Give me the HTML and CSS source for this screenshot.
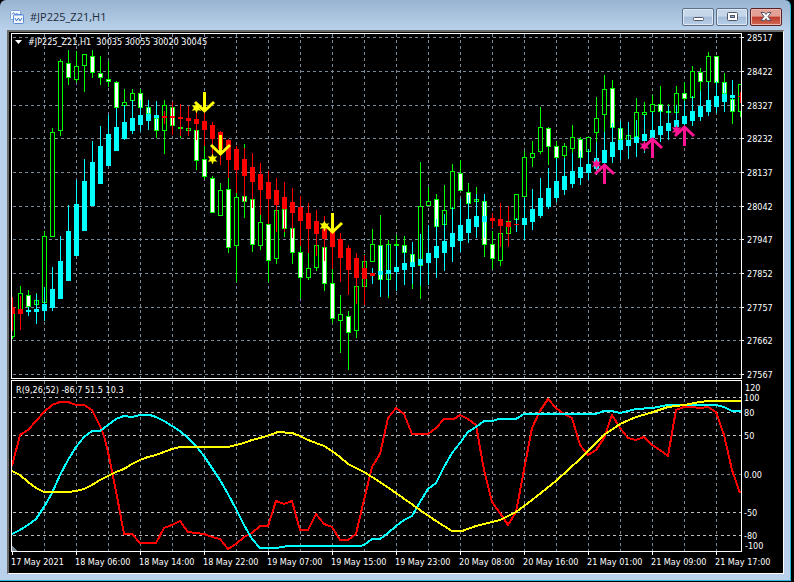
FILE: index.html
```html
<!DOCTYPE html>
<html lang="en">
<head>
<meta charset="utf-8">
<meta name="viewport" content="width=device-width, initial-scale=1">
<title>#JP225_Z21,H1</title>
<link rel="stylesheet" href="styles.css">
</head>
<body>
<main class="window">
  <header class="titlebar">
    <svg class="app-icon" viewBox="0 0 14 14" aria-hidden="true">
      <rect x="0.5" y="0.5" width="10" height="9" rx="1" fill="#f4f8fd" stroke="#7fa6dc"/>
      <path d="M2 4.500l1.500-2 1.500 2 1.500-1 2 1" fill="none" stroke="#5b8bd0"/>
      <rect x="3.500" y="4.500" width="10" height="9" rx="1" fill="#f4f8fd" stroke="#5b8bd8"/>
      <path d="M4 5.500h9" stroke="#a9c6ee"/>
      <path d="M5 8l1.500 3 2-3 1.500 3 2-3" fill="none" stroke="#3f78c8"/>
    </svg>
    <h1 class="title">#JP225_Z21,H1</h1>
    <div class="controls">
      <button class="control" type="button" aria-label="Minimize">
        <svg viewBox="0 0 12 12" aria-hidden="true"><rect x="1.500" y="6.500" width="10" height="3" rx="1" fill="#fff" stroke="#535666"/></svg>
      </button>
      <button class="control" type="button" aria-label="Maximize">
        <svg viewBox="0 0 12 12" aria-hidden="true"><rect x="1.500" y="1.500" width="10" height="8" rx="1" fill="#fff" stroke="#535666"/><rect x="4.500" y="4.500" width="4" height="2" fill="#8fb0d8" stroke="#535666"/></svg>
      </button>
      <button class="control control-close" type="button" aria-label="Close">
        <svg viewBox="0 0 12 12" aria-hidden="true"><path d="M1 1.500h3.500L6 3.500l1.500-2H11L8 5.500l3 4H7.500L6 7.500l-1.500 2H1l3-4z" fill="#fff" stroke="#535666"/></svg>
      </button>
    </div>
  </header>
  <section class="chart-frame">
    <svg class="chart" id="chart" viewBox="9 32 774 541" role="img" aria-label="#JP225_Z21,H1 candlestick chart"></svg>
  </section>
</main>
<script src="chart.js"></script>
</body>
</html>
```
FILE: styles.css
```css
* {
  box-sizing: border-box;
}

body {
  margin: 0;
  background: #000;
}

.window {
  margin-right: 3px;
  padding: 0 6px 6px 7px;
  border: solid #2cb8d8;
  border-width: 0 1px 1px 0;
  border-radius: 6px 6px 0 0;
  background: linear-gradient(#99b4d1, #b9d1ea 30px);
}

.titlebar {
  display: flex;
  align-items: center;
  height: 30px;
  padding: 4px 2px 0 3px;
}

.app-icon {
  width: 14px;
  height: 14px;
}

.title {
  flex: 1;
  margin: 0 0 0 6px;
  font: 11px/18px "Open Sans", sans-serif;
  color: #1e2a3a;
}

.controls {
  display: flex;
  gap: 2px;
}

.control {
  display: grid;
  place-items: center;
  width: 32px;
  height: 18px;
  padding: 0;
  border: 1px solid #5e6f87;
  border-radius: 2px;
  background: linear-gradient(#c6d7ea 45%, #a4bcd8 50%, #b8cfe8);
  box-shadow: inset 0 0 0 1px #dce8f5;
}

.control svg {
  width: 12px;
  height: 12px;
}

.control-close {
  border-color: #5a2028;
  background: linear-gradient(#e3a196 45%, #c0392b 50%, #cf6a55);
  box-shadow: inset 0 0 0 1px #eab8ae;
}

.chart-frame {
  border: solid #6a6a6a;
  border-width: 2px 1px 1px 2px;
  border-right-color: #fff;
  border-bottom-color: #fff;
  background: #000;
}

.chart {
  display: block;
  width: 100%;
  height: auto;
}

.chart text {
  font: 9px "DejaVu Sans Condensed", "DejaVu Sans", sans-serif;
  fill: #fff;
  white-space: pre;
}

.grid {
  stroke: #778899;
  stroke-dasharray: 3 3;
}

.level {
  stroke: #c0c0c0;
  stroke-dasharray: 3 3;
}

.frame {
  fill: none;
  stroke: #fff;
}

.crisp {
  shape-rendering: crispEdges;
}

.osc {
  fill: none;
  stroke-width: 2;
  stroke-linejoin: round;
  shape-rendering: crispEdges;
}

.osc-fast {
  stroke: #f00;
}

.osc-mid {
  stroke: #0ff;
}

.osc-slow {
  stroke: #ff0;
}

.arrow {
  fill: none;
  stroke-width: 3;
}

.sell .arrow {
  stroke: #ff0;
}

.sell .star {
  fill: #ff0;
}

.buy .arrow {
  stroke: #ff1493;
}

.buy .star {
  fill: #ff1493;
}
```
FILE: chart.js
```js
const NS = "http://www.w3.org/2000/svg";
const chart = document.getElementById("chart");
const LEFT = 11, RIGHT = 741, STEP = 8, FIRST = 12;

function add(parent, name, attrs, text) {
  const node = document.createElementNS(NS, name);
  for (const key in attrs) node.setAttribute(key, attrs[key]);
  if (text !== undefined) node.textContent = text;
  parent.appendChild(node);
  return node;
}

// Price bars: high, body top, body bottom, low, 1 when the body is filled.
const bars = [
  [310,310,337,339,0],[286,293,310,310,0],[290,295,307,308,1],[293,300,305,305,0],
  [231,236,303,303,0],[128,132,237,237,0],[59,61,131,136,0],[50,63,78,85,1],
  [51,66,80,82,0],[54,54,66,92,0],[50,56,73,78,1],[56,73,78,85,1],
  [61,79,82,87,1],[81,82,108,110,1],[89,102,106,106,0],[89,93,101,101,0],
  [89,93,108,131,1],[107,107,114,130,1],[115,118,131,138,1],[100,105,131,154,0],
  [107,107,126,126,1],[127,127,129,138,0],[128,128,131,131,0],[130,130,161,170,1],
  [146,159,177,179,1],[176,178,213,213,1],[183,190,216,216,0],[178,189,248,253,1],
  [193,197,246,282,0],[144,196,202,218,1],[199,199,245,252,1],[215,222,246,250,0],
  [224,224,261,282,1],[210,210,259,264,0],[209,209,229,237,1],[228,228,253,264,1],
  [246,252,278,298,1],[253,268,278,280,0],[245,245,268,271,0],[247,247,284,291,1],
  [269,283,319,323,1],[295,314,321,353,0],[311,316,333,370,1],[286,286,331,338,0],
  [254,261,287,287,0],[229,244,262,262,0],[215,245,280,280,1],[240,244,280,298,0],
  [235,244,246,246,0],[236,245,253,253,1],[254,254,266,289,1],[162,206,266,299,0],
  [187,201,206,206,0],[194,199,227,227,1],[185,210,225,225,0],[164,171,209,209,0],
  [160,173,191,191,1],[183,192,204,204,1],[187,199,202,202,0],[201,201,245,257,1],
  [231,244,259,269,1],[233,233,261,266,0],[221,221,234,234,0],[194,194,220,220,0],
  [151,157,197,197,0],[141,153,158,167,0],[107,127,152,154,0],[127,128,147,165,1],
  [141,146,158,158,1],[143,146,156,158,0],[125,137,149,154,0],[137,139,158,158,1],
  [137,137,152,152,0],[97,118,133,142,0],[75,89,115,132,0],[80,88,128,128,1],
  [128,128,140,140,1],[135,135,141,141,0],[98,112,137,137,0],[102,112,115,115,0],
  [95,104,112,112,0],[86,104,112,112,1],[104,111,113,113,0],[86,93,113,113,0],
  [82,93,99,101,1],[66,71,98,98,0],[68,72,82,91,1],[52,56,82,82,0],
  [56,56,83,83,1],[73,82,94,94,1],[99,99,112,124,1],[84,84,112,117,0]
];

// Smoothed bars: high, body top, body bottom, low, wick colour, body colour.
const UP = "#0ff", DOWN = "#f00";
const smooth = [
  [297,307,314,331,DOWN],[296,309,314,330,DOWN],[307,310,312,316,UP],[294,309,312,324,UP],
  [287,304,311,321,UP],[267,289,308,311,UP],[236,261,299,299,UP],[205,231,281,281,UP],
  [180,204,256,256,UP],[159,181,231,231,UP],[141,162,206,206,UP],[126,146,184,184,UP],
  [115,134,166,166,UP],[108,127,151,151,UP],[105,122,139,140,UP],[100,118,131,134,UP],
  [100,115,125,131,UP],[100,114,121,130,UP],[101,115,118,130,UP],[111,116,118,124,DOWN],
  [102,116,118,135,DOWN],[104,117,119,136,DOWN],[106,118,121,136,DOWN],[108,119,124,140,DOWN],
  [112,121,130,146,DOWN],[122,125,139,155,DOWN],[131,132,149,165,DOWN],[139,140,160,178,DOWN],
  [146,149,170,193,DOWN],[148,159,176,202,DOWN],[153,167,182,208,DOWN],[163,174,190,215,DOWN],
  [171,182,199,224,DOWN],[178,190,205,232,DOWN],[182,197,209,232,DOWN],[188,202,213,238,DOWN],
  [196,207,221,246,DOWN],[203,213,229,253,DOWN],[210,221,234,256,DOWN],[216,229,239,261,DOWN],
  [231,231,247,269,DOWN],[233,239,258,282,DOWN],[245,248,270,295,DOWN],[253,258,278,304,DOWN],
  [255,268,279,305,DOWN],[268,273,276,284,UP,DOWN],[246,271,275,297,UP],[245,270,274,296,UP],
  [246,267,272,291,UP],[246,263,270,285,UP],[242,262,267,284,UP],[234,259,265,286,UP],
  [225,253,263,285,UP],[219,246,258,278,UP],[214,241,253,271,UP],[207,233,247,262,UP],
  [199,225,241,252,UP],[195,219,233,243,UP],[194,216,227,238,UP],[194,216,222,238,UP],
  [213,218,221,228,DOWN],[203,219,226,247,DOWN],[206,222,227,247,DOWN],[218,224,225,232,UP,DOWN],
  [198,218,225,240,UP],[189,209,222,230,UP],[178,198,216,218,UP],[168,188,207,209,UP],
  [158,181,198,202,UP],[158,176,190,195,UP],[153,171,184,188,UP],[151,167,178,185,UP],
  [149,164,173,180,UP],[142,158,169,175,UP],[132,150,163,165,UP],[123,142,157,163,UP],
  [121,140,150,160,UP],[122,140,146,159,UP],[120,137,143,157,UP],[115,134,141,153,UP],
  [112,130,138,140,UP],[110,126,135,142,UP],[106,123,131,140,UP],[105,120,127,129,UP],
  [101,116,124,126,UP],[96,111,121,126,UP],[91,106,117,121,UP],[82,100,112,116,UP],
  [81,96,107,113,UP],[83,94,102,112,UP],[80,95,98,111,UP],[92,96,97,103,DOWN]
];

const prices = [[28517,37],[28422,71],[28327,105],[28232,138],[28137,172],[28042,206],
  [27947,239],[27852,273],[27757,307],[27662,340],[27567,374]];
const levels = [["120",387,0],["100",397,1],["80",412,1],["50",435,1],["0.00",474,2],
  ["-50",512,1],["-80",535,1],["-100",545,0]];
const times = ["17 May 2021","18 May 06:00","18 May 14:00","18 May 22:00","19 May 07:00",
  "19 May 15:00","19 May 23:00","20 May 08:00","20 May 16:00","21 May 01:00",
  "21 May 09:00","21 May 17:00"];

const oscillators = {
  "osc-fast": "12,466 20,435 28,430 36,421 44,412 52,405 60,402 68,402 76,405 84,405 92,410 100,426 104,436 108,452 116,491 124,534 132,534 140,543 156,543 164,528 172,525 180,521 188,532 204,534 212,537 220,539 228,549 236,544 244,537 252,533 260,526 268,526 276,501 284,504 292,501 300,530 308,530 316,514 324,524 332,527 340,540 348,540 356,534 364,500 372,467 380,454 388,418 396,408 404,414 412,434 428,434 436,428 444,419 454,419 460,415 468,419 476,425 484,470 492,502 500,513 508,525 516,512 524,470 532,428 540,411 548,399 556,408 564,414 572,418 580,445 588,455 596,450 604,438 612,415 620,428 628,438 636,440 644,437 652,445 660,450 668,456 676,410 684,407 692,407 700,408 708,407 716,412 724,435 732,470 740,493",
  "osc-mid": "12,534 20,530 28,525 36,519 44,507 52,493 60,475 68,460 76,447 84,437 92,431 100,431 108,425 116,419 124,416 132,417 140,415 150,415 156,417 164,421 172,426 180,431 188,438 196,446 204,456 212,468 220,480 228,494 236,509 244,525 252,539 260,548 276,548 288,546 360,546 364,545 372,539 380,539 388,533 396,526 404,520 412,516 420,502 428,489 436,483 444,467 452,453 460,443 468,432 476,427 484,421 493,421 498,419 516,419 524,414 596,414 604,411 612,411 620,413 636,409 652,408 668,405 716,405 724,407 732,411 741,411",
  "osc-slow": "12,471 20,475 28,482 36,488 44,492 68,492 76,491 84,489 92,485 100,480 108,476 116,472 124,469 132,464 140,460 148,457 156,455 164,452 172,449 180,447 228,447 244,443 252,440 260,438 270,435 278,432 292,433 300,436 308,440 324,446 332,451 340,457 348,464 364,472 380,482 396,493 420,510 436,521 452,531 462,531 476,526 500,520 508,516 516,512 524,506 532,500 556,481 580,459 604,435 620,424 636,417 650,413 668,407 684,405 700,402 708,401 741,401"
};

const clip = add(add(chart, "defs", {}), "clipPath", { id: "plot" });
add(clip, "rect", { x: LEFT + 1, y: 34, width: RIGHT - LEFT - 1, height: 517 });

function line(parent, x1, y1, x2, y2, cls) {
  add(parent, "path", { d: `M${x1} ${y1}L${x2} ${y2}`, class: cls });
}

const lines = add(chart, "g", { class: "crisp" });
for (let x = 44; x < RIGHT; x += 32) {
  line(lines, x + .5, 34, x + .5, 378, "grid");
  line(lines, x + .5, 381, x + .5, 551, "grid");
}
for (const [value, y] of prices) {
  line(lines, 13, y + .5, RIGHT, y + .5, "grid");
  line(lines, RIGHT, y + .5, RIGHT + 3, y + .5, "frame");
  add(chart, "text", { x: 747, y: y + 4 }, value);
}
for (const [value, y, kind] of levels) {
  if (kind) line(lines, 13, y + .5, RIGHT, y + .5, kind === 1 ? "level" : "grid");
  add(chart, "text", { x: kind === 0 ? 745 : 744, y: y + 4 }, value);
}
times.forEach((label, i) => {
  const x = FIRST + i * 64;
  line(lines, x + .5, 551, x + .5, 555, "frame");
  add(chart, "text", { x: x - 1, y: 565 }, label);
});
add(lines, "path", { d: "M12 546l5 5h-5z", fill: "#778899" });

const plot = add(chart, "g", { "clip-path": "url(#plot)" });
const candles = add(plot, "g", { class: "crisp" });
bars.forEach(([high, top, bottom, low, filled], i) => {
  const x = FIRST + i * STEP;
  add(candles, "rect", { x, y: high, width: 1, height: low - high, fill: "#0f0" });
  add(candles, "rect", { x: x - 2, y: top, width: 5, height: bottom - top, fill: "#0f0" });
  if (bottom - top > 2) {
    add(candles, "rect", { x: x - 1, y: top + 1, width: 3, height: bottom - top - 2, fill: filled ? "#fff" : "#000" });
  }
});
smooth.forEach(([high, top, bottom, low, wick, body], i) => {
  const x = FIRST + i * STEP;
  add(candles, "rect", { x, y: high, width: 1, height: low - high, fill: wick });
  add(candles, "rect", { x: x - 2, y: top, width: 5, height: bottom - top, fill: body || wick });
});

for (const name in oscillators) {
  add(plot, "polyline", { points: oscillators[name], class: "osc " + name });
}

function star(parent, cx, cy) {
  const points = [];
  for (let k = 0; k < 12; k++) {
    const r = k % 2 ? 2.6 : 5.5, a = k * Math.PI / 6;
    points.push((cx + r * Math.sin(a)).toFixed(1) + "," + (cy - r * Math.cos(a)).toFixed(1));
  }
  add(parent, "polygon", { points: points.join(" "), class: "star" });
}
// Signals: arrow x, arrow top, star y.
for (const [x, y, starY] of [[204, 92, 108], [220, 135, 159], [332, 213, 226]]) {
  const g = add(plot, "g", { class: "sell" });
  star(g, x - 7.500, starY);
  add(g, "path", { d: `M${x + .5} ${y}v19M${x - 9} ${y + 10}l9.500 9 9.500-9`, class: "arrow" });
}
for (const [x, y, starY] of [[604, 163, 164], [652, 137, 146], [684, 125, 130]]) {
  const g = add(plot, "g", { class: "buy" });
  star(g, x - 7.500, starY);
  add(g, "path", { d: `M${x + .5} ${y + 21}v-19M${x - 9} ${y + 11}l9.500-9 9.500 9`, class: "arrow" });
}

const frames = add(chart, "g", { class: "crisp" });
add(frames, "rect", { x: 11.5, y: 33.5, width: 730, height: 345, class: "frame" });
add(frames, "rect", { x: 11.5, y: 380.5, width: 730, height: 171, class: "frame" });
add(chart, "path", { d: "M15 40h7l-3.500 4z", fill: "#fff" });
add(chart, "text", { x: 28, y: 45 }, "#JP225_Z21,H1  30035 30055 30020 30045");
add(chart, "text", { x: 16, y: 393 }, "R(9,26,52) -86.7 51.5 10.3");
```
